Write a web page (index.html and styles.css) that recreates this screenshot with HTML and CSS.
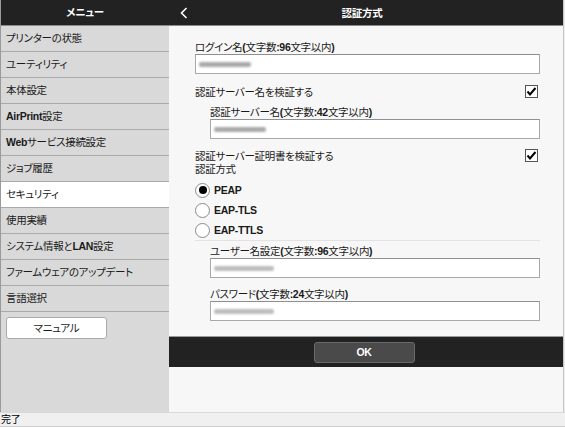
FILE: index.html
```html
<!DOCTYPE html>
<html>
<head>
  <title>認証方式</title>
  <link rel="stylesheet" href="styles.css">
</head>
<body>
  <div class="window">
    <div class="app">
      <!-- Left menu -->
      <aside class="menu">
        <div class="menu-head">メニュー</div>
        <div class="menu-item">プリンターの状態</div>
        <div class="menu-item">ユーティリティ</div>
        <div class="menu-item">本体設定</div>
        <div class="menu-item"><b>AirPrint</b>設定</div>
        <div class="menu-item"><b>Web</b>サービス接続設定</div>
        <div class="menu-item">ジョブ履歴</div>
        <div class="menu-item active">セキュリティ</div>
        <div class="menu-item">使用実績</div>
        <div class="menu-item">システム情報と<b>LAN</b>設定</div>
        <div class="menu-item">ファームウェアのアップデート</div>
        <div class="menu-item">言語選択</div>
        <div class="manual-btn">マニュアル</div>
      </aside>

      <!-- Main pane -->
      <main class="pane">
        <div class="pane-head">
          <svg class="back" width="8" height="12" viewBox="0 0 8 12">
            <polyline points="6.5,1 1.5,6 6.5,11" fill="none" stroke="#fff" stroke-width="1.6"/>
          </svg>
          <span class="title">認証方式</span>
        </div>

        <div class="form">
          <div class="label">ログイン名<b>(</b>文字数<b>:96</b>文字以内<b>)</b></div>
          <div class="input"><span class="blur" style="width:52px"></span></div>

          <div class="check-row">
            <span>認証サーバー名を検証する</span>
            <svg class="check" width="13" height="13" viewBox="0 0 13 13">
              <rect x="0.5" y="0.5" width="12" height="12" fill="#fff" stroke="#555"/>
              <polyline points="2.5,6.5 5,9.5 10.5,3" fill="none" stroke="#000" stroke-width="2"/>
            </svg>
          </div>
          <div class="sub">
            <div class="label">認証サーバー名<b>(</b>文字数<b>:42</b>文字以内<b>)</b></div>
            <div class="input"><span class="blur" style="width:52px"></span></div>
          </div>

          <div class="check-row second">
            <span>認証サーバー証明書を検証する</span>
            <svg class="check" width="13" height="13" viewBox="0 0 13 13">
              <rect x="0.5" y="0.5" width="12" height="12" fill="#fff" stroke="#555"/>
              <polyline points="2.5,6.5 5,9.5 10.5,3" fill="none" stroke="#000" stroke-width="2"/>
            </svg>
          </div>
          <div class="label plain">認証方式</div>

          <div class="radios">
            <div class="radio-row"><span class="radio on"></span><b>PEAP</b></div>
            <div class="radio-row"><span class="radio"></span><b>EAP-TLS</b></div>
            <div class="radio-row"><span class="radio"></span><b>EAP-TTLS</b></div>
          </div>

          <div class="sub sep">
            <div class="label">ユーザー名設定<b>(</b>文字数<b>:96</b>文字以内<b>)</b></div>
            <div class="input"><span class="blur dots" style="width:60px"></span></div>
            <div class="label gap">パスワード<b>(</b>文字数<b>:24</b>文字以内<b>)</b></div>
            <div class="input"><span class="blur dots" style="width:60px"></span></div>
          </div>
        </div>

        <div class="pane-foot">
          <div class="ok-btn">OK</div>
        </div>
      </main>
    </div>
    <div class="status">完了</div>
  </div>
</body>
</html>
```

FILE: styles.css
```css
/* page frame */
body {
  margin: 0;
  font-family: "Liberation Sans", "Noto Sans CJK JP", sans-serif;
  font-size: 10.5px;
  letter-spacing: -0.3px;
  font-feature-settings: "palt";
  color: #1a1a1a;
}

b {
  font-weight: bold;
}

.window {
  width: 565px;
  height: 427px;
  overflow: hidden;
  background: #ececec;
}

.app {
  display: flex;
  height: 412px;
  margin-right: 1px;
}

/* left menu */
.menu {
  width: 168px;
  border-left: 1px solid #9a9a9a;
  background: #d9d9d9;
}

.menu-head {
  height: 25px;
  line-height: 25px;
  border-bottom: 1px solid #8a8a8a;
  background: #222;
  color: #fff;
  font-weight: bold;
  text-align: center;
}

.menu-item {
  height: 25px;
  line-height: 25px;
  padding-left: 5px;
  border-bottom: 1px solid #a9a9a9;
  white-space: nowrap;
}

.menu-item.active {
  background: #fff;
}

.manual-btn {
  width: 99px;
  height: 20px;
  line-height: 20px;
  margin: 5px 0 0 5px;
  background: #fff;
  border: 1px solid #aaa;
  border-radius: 3px;
  text-align: center;
}

/* main pane */
.pane {
  flex: 1;
  display: flex;
  flex-direction: column;
  background: #f7f7f7;
  border-right: 1px solid #c6c6c6;
}

.pane-head {
  position: relative;
  height: 25px;
  border-bottom: 1px solid #8a8a8a;
  background: #222;
  color: #fff;
  font-weight: bold;
  display: flex;
  align-items: center;
  justify-content: center;
}

.pane-head .back {
  position: absolute;
  left: 11px;
  top: 7px;
}

.pane-head .title {
  margin-right: 8px;
}

.form {
  padding: 14px 23px 15px 26px;
}

.label {
  height: 14px;
  line-height: 14px;
  white-space: nowrap;
}

.label.gap {
  margin-top: 9px;
}

.input {
  height: 18px;
  background: #fff;
  border: 1px solid #a9a9a9;
  border-top-color: #8f8f8f;
  display: flex;
  align-items: center;
  padding-left: 3px;
}

.blur {
  display: block;
  height: 5px;
  background: #a9a9a9;
  border-radius: 2px;
  filter: blur(1px);
}

.blur.dots {
  background: #bdbdbd;
}

.check-row {
  display: flex;
  justify-content: space-between;
  align-items: center;
  height: 14px;
  margin-top: 10px;
  padding-right: 2px;
}

.check-row.second {
  margin-top: 9px;
}

.sub {
  padding-left: 15px;
  margin-top: 7px;
}

.radios {
  margin-top: 4px;
}

.radio-row {
  display: flex;
  align-items: center;
  height: 20px;
}

.radio {
  width: 13px;
  height: 13px;
  margin-right: 4px;
  border: 1px solid #8a8a8a;
  border-radius: 50%;
  background: #fff;
  display: flex;
  align-items: center;
  justify-content: center;
}

.radio.on::after {
  content: "";
  width: 8px;
  height: 8px;
  border-radius: 50%;
  background: #000;
}

.sub.sep {
  margin-top: 0;
  padding-top: 3px;
  border-top: 1px solid #e2e2e2;
}

/* footer with OK */
.pane-foot {
  height: 30px;
  border-top: 1px solid #9a9a9a;
  background: #222;
  display: flex;
  align-items: center;
  justify-content: center;
}

.ok-btn {
  width: 99px;
  height: 19px;
  line-height: 19px;
  margin-right: 4px;
  background: #4a4a4a;
  border: 1px solid #6a6a6a;
  border-radius: 3px;
  color: #fff;
  font-weight: bold;
  text-align: center;
}

/* browser status bar */
.status {
  height: 13px;
  line-height: 13px;
  border-top: 1px solid #dadada;
  border-bottom: 1px solid #cfcfcf;
  padding-left: 1px;
  background: #f0f0f0;
  font-size: 10px;
  color: #000;
}
```
